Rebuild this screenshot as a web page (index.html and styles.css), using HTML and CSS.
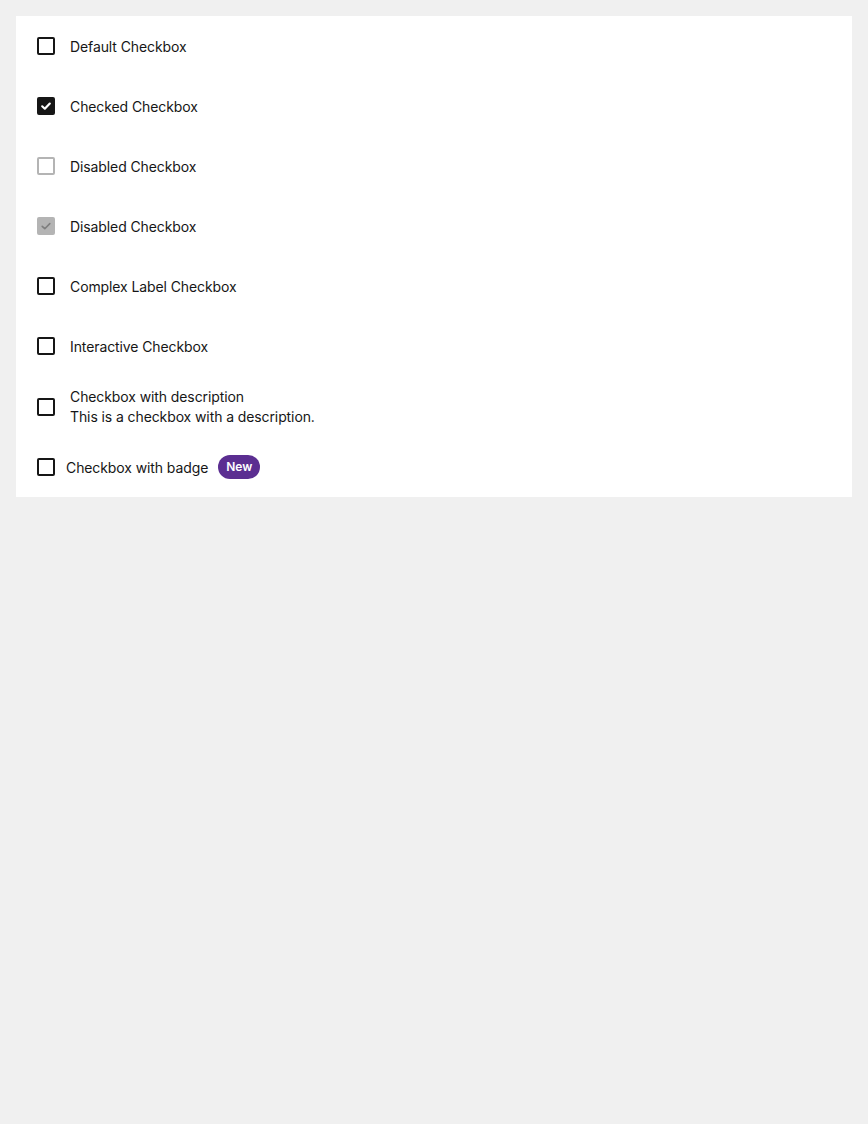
FILE: index.html
```html
<!DOCTYPE html>
<html>
<head>
<meta charset="utf-8">
<link rel="stylesheet" href="styles.css">
</head>
<body>
<div class="card">
  <label class="row">
    <span class="box"></span>
    <span class="label">Default Checkbox</span>
  </label>
  <label class="row">
    <span class="box checked"><svg viewBox="0 0 18 18" width="18" height="18"><path d="M5.2 9.3l2.6 2.4L12.8 6.6" fill="none" stroke="#fff" stroke-width="2.2" stroke-linecap="round" stroke-linejoin="round"/></svg></span>
    <span class="label">Checked Checkbox</span>
  </label>
  <label class="row">
    <span class="box disabled"></span>
    <span class="label">Disabled Checkbox</span>
  </label>
  <label class="row">
    <span class="box disabled-checked"><svg viewBox="0 0 18 18" width="18" height="18"><path d="M5.2 9.3l2.6 2.4L12.8 6.6" fill="none" stroke="#7e7e7e" stroke-width="1.6" stroke-linecap="round" stroke-linejoin="round"/></svg></span>
    <span class="label">Disabled Checkbox</span>
  </label>
  <label class="row">
    <span class="box"></span>
    <span class="label">Complex Label Checkbox</span>
  </label>
  <label class="row">
    <span class="box"></span>
    <span class="label">Interactive Checkbox</span>
  </label>
  <label class="row row-desc">
    <span class="box"></span>
    <span class="label desc-wrap">
      <span class="desc-title">Checkbox with description</span>
      <span class="desc-text">This is a checkbox with a description.</span>
    </span>
  </label>
  <label class="row row-badge">
    <span class="box"></span>
    <span class="label badge-label">Checkbox with badge</span>
    <span class="badge">New</span>
  </label>
</div>
</body>
</html>
```
FILE: styles.css
```css
html, body {
  margin: 0;
  padding: 0;
}
body {
  background: #f0f0f0;
  font-family: Inter, "Noto Sans", sans-serif;
  font-size: 14px;
  letter-spacing: -0.1px;
  color: #161616;
  padding: 16px;
}
.card {
  background: #fff;
  padding: 0 21px;
}
.row {
  display: flex;
  align-items: center;
  height: 60px;
  line-height: 20px;
}
.box {
  width: 18px;
  height: 18px;
  box-sizing: border-box;
  border: 2px solid #161616;
  border-radius: 2px;
  flex: none;
  position: relative;
  display: block;
}
.box svg {
  position: absolute;
  left: -2px;
  top: -2px;
}
.box.checked {
  background: #161616;
}
.box.disabled {
  border-color: #b4b4b4;
}
.box.disabled-checked {
  background: #b4b4b4;
  border-color: #b4b4b4;
}
.label {
  margin-left: 15px;
  margin-top: 1px;
}
.row-desc {
  height: 61px;
}
.desc-wrap {
  display: flex;
  flex-direction: column;
}
.row-badge .badge-label {
  margin-left: 11px;
}
.badge {
  margin-left: 10px;
  height: 24px;
  padding: 0 8px;
  border-radius: 12px;
  background: #5b2e91;
  color: #fff;
  font-size: 12px;
  font-weight: 600;
  letter-spacing: 0;
  line-height: 24px;
}
```
